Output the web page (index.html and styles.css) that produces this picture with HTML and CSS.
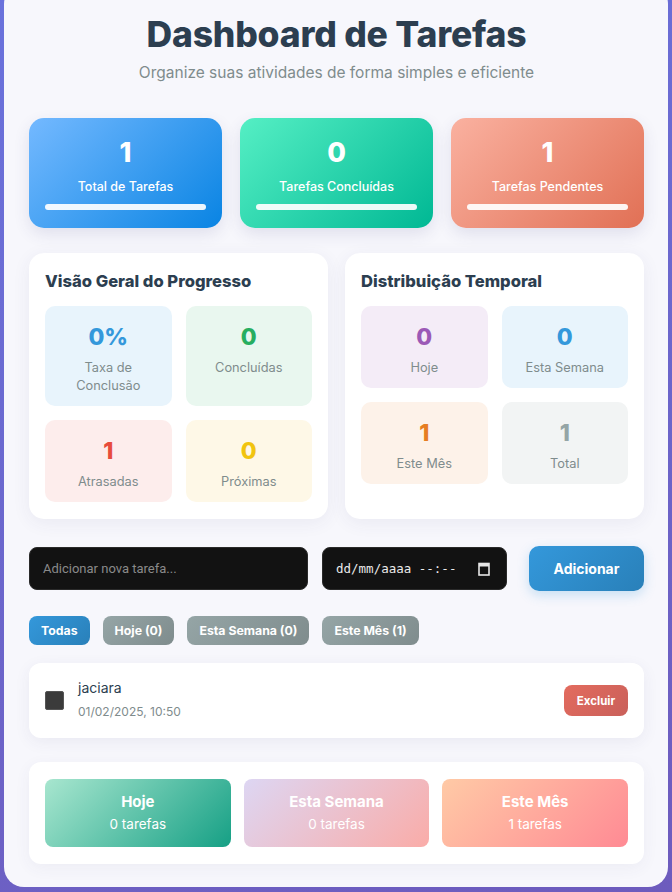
FILE: index.html
```html
<!DOCTYPE html>
<html lang="pt-BR">
<head>
<meta charset="utf-8">
<title>Dashboard de Tarefas</title>
<link rel="stylesheet" href="styles.css">
</head>
<body>
<div class="container">
  <header class="header">
    <h1 class="title">Dashboard de Tarefas</h1>
    <p class="subtitle">Organize suas atividades de forma simples e eficiente</p>
  </header>

  <section class="stats">
    <div class="stat stat-blue">
      <div class="stat-num">1</div>
      <div class="stat-label">Total de Tarefas</div>
      <div class="stat-bar"></div>
    </div>
    <div class="stat stat-green">
      <div class="stat-num">0</div>
      <div class="stat-label">Tarefas Concluídas</div>
      <div class="stat-bar"></div>
    </div>
    <div class="stat stat-red">
      <div class="stat-num">1</div>
      <div class="stat-label">Tarefas Pendentes</div>
      <div class="stat-bar"></div>
    </div>
  </section>

  <section class="panels">
    <div class="panel">
      <h2 class="panel-title">Visão Geral do Progresso</h2>
      <div class="tiles">
        <div class="tile t-blue"><div class="tile-num">0%</div><div class="tile-label">Taxa de Conclusão</div></div>
        <div class="tile t-green"><div class="tile-num">0</div><div class="tile-label">Concluídas</div></div>
        <div class="tile t-red"><div class="tile-num">1</div><div class="tile-label">Atrasadas</div></div>
        <div class="tile t-yellow"><div class="tile-num">0</div><div class="tile-label">Próximas</div></div>
      </div>
    </div>
    <div class="panel">
      <h2 class="panel-title">Distribuição Temporal</h2>
      <div class="tiles">
        <div class="tile t-purple"><div class="tile-num">0</div><div class="tile-label">Hoje</div></div>
        <div class="tile t-blue"><div class="tile-num">0</div><div class="tile-label">Esta Semana</div></div>
        <div class="tile t-orange"><div class="tile-num">1</div><div class="tile-label">Este Mês</div></div>
        <div class="tile t-gray"><div class="tile-num">1</div><div class="tile-label">Total</div></div>
      </div>
    </div>
  </section>

  <section class="add-row">
    <div class="field text-field"><span class="placeholder">Adicionar nova tarefa...</span></div>
    <div class="field date-field">
      <span class="date-text">dd/mm/aaaa --:--</span>
      <svg class="cal" width="12" height="14" viewBox="0 0 12 14"><rect x="1" y="1.5" width="10" height="11.5" fill="none" stroke="#e6e6e6" stroke-width="1.6"/><rect x="1" y="1.5" width="10" height="3" fill="#e6e6e6"/></svg>
    </div>
    <button class="add-btn">Adicionar</button>
  </section>

  <section class="filters">
    <button class="filter active">Todas</button>
    <button class="filter">Hoje (0)</button>
    <button class="filter">Esta Semana (0)</button>
    <button class="filter">Este Mês (1)</button>
  </section>

  <section class="task">
    <div class="check"></div>
    <div class="task-info">
      <div class="task-name">jaciara</div>
      <div class="task-date">01/02/2025, 10:50</div>
    </div>
    <button class="del-btn">Excluir</button>
  </section>

  <section class="summary">
    <div class="sum sum-today"><div class="sum-title">Hoje</div><div class="sum-sub">0 tarefas</div></div>
    <div class="sum sum-week"><div class="sum-title">Esta Semana</div><div class="sum-sub">0 tarefas</div></div>
    <div class="sum sum-month"><div class="sum-title">Este Mês</div><div class="sum-sub">1 tarefas</div></div>
  </section>
</div>
</body>
</html>
```

FILE: styles.css
```css
* { box-sizing: border-box; }

html, body { height: 100%; }

body {
  margin: 0;
  padding: 0 4px 5px;
  background: linear-gradient(160deg, #6a72dc 0%, #6d5bbd 100%);
  font-family: "Inter", "Noto Sans", sans-serif;
  color: #2c3e50;
  overflow: hidden;
}

.container {
  margin-top: -16px;
  background: #f7f7fc;
  border-radius: 20px;
  padding: 29px 24px 23px 25px;
}

.header { text-align: center; }

.title {
  margin: 0;
  font-size: 35.5px;
  line-height: 44px;
  font-weight: 800;
  color: #2c3e50;
  letter-spacing: -0.2px;
}

.subtitle {
  margin: 5px 0 0;
  font-size: 15.5px;
  line-height: 22px;
  color: #7f8c8d;
}

.stats {
  margin-top: 34px;
  display: grid;
  grid-template-columns: repeat(3, 1fr);
  gap: 18px;
}

.stat {
  height: 110px;
  border-radius: 15px;
  padding: 17px 16px 18px;
  color: #fff;
  text-align: center;
  box-shadow: 0 6px 16px rgba(60, 60, 120, 0.12);
}
.stat-blue { background: linear-gradient(135deg, #74b9ff, #0984e3); }
.stat-green { background: linear-gradient(135deg, #55efc4, #00b894); }
.stat-red { background: linear-gradient(135deg, #fab1a0, #e17055); }

.stat-num { font-size: 27px; line-height: 36px; font-weight: 800; }
.stat-label { margin-top: 6px; font-size: 12.5px; line-height: 20px; font-weight: 500; }
.stat-bar {
  margin-top: 7px;
  height: 6px;
  border-radius: 3px;
  background: rgba(255, 255, 255, 0.92);
}

.panels {
  margin-top: 25px;
  display: grid;
  grid-template-columns: 1fr 1fr;
  gap: 17px;
}

.panel {
  background: #fff;
  border-radius: 15px;
  padding: 16px 16px 17px;
  box-shadow: 0 4px 18px rgba(60, 60, 120, 0.07);
}

.panel-title {
  margin: 0 0 13px;
  font-size: 16.6px;
  line-height: 24px;
  font-weight: 800;
  color: #2c3e50;
}

.tiles {
  display: grid;
  grid-template-columns: 1fr 1fr;
  gap: 14px;
}

.tile {
  border-radius: 10px;
  padding: 17px 14px 11px;
  text-align: center;
}
.tile-num { font-size: 23px; line-height: 29px; font-weight: 800; }
.tile-label { margin-top: 7px; font-size: 12.8px; line-height: 18px; color: #7f8c8d; padding: 0 8px; }

.t-blue { background: #e8f4fc; }
.t-blue .tile-num { color: #3498db; }
.t-green { background: #e9f7ef; }
.t-green .tile-num { color: #27ae60; }
.t-red { background: #fdedec; }
.t-red .tile-num { color: #e74c3c; }
.t-yellow { background: #fef8e7; }
.t-yellow .tile-num { color: #f1c40f; }
.t-purple { background: #f4ecf7; }
.t-purple .tile-num { color: #9b59b6; }
.t-orange { background: #fdf2e9; }
.t-orange .tile-num { color: #e67e22; }
.t-gray { background: #f2f4f4; }
.t-gray .tile-num { color: #95a5a6; }

.add-row {
  margin-top: 27px;
  display: flex;
  align-items: center;
  gap: 14px;
}

.field {
  height: 43px;
  background: #121212;
  border: 1px solid #2a2a2a;
  border-radius: 8px;
  display: flex;
  align-items: center;
  padding: 0 13px;
}
.text-field { flex: 1; }
.placeholder { font-size: 13px; color: #8a8a8a; font-family: "Roboto", sans-serif; }
.date-field { width: 185px; justify-content: space-between; padding-right: 16px; }
.date-text { font-family: "DejaVu Sans Mono", monospace; font-size: 12.5px; color: #eaeaea; }
.cal { display: block; }

.add-btn {
  margin-left: 8px;
  width: 115px;
  height: 45px;
  border: 0;
  border-radius: 10px;
  background: linear-gradient(135deg, #3498db, #2980b9);
  color: #fff;
  font-family: inherit;
  font-size: 14px;
  font-weight: 700;
  box-shadow: 0 4px 12px rgba(52, 152, 219, 0.25);
}

.filters {
  margin-top: 25px;
  display: flex;
  gap: 13px;
}

.filter {
  height: 29px;
  padding: 0 12px;
  border: 0;
  border-radius: 8px;
  background: linear-gradient(135deg, #95a5a6, #7f8c8d);
  color: #fff;
  font-family: inherit;
  font-size: 12.3px;
  font-weight: 700;
}
.filter.active { background: linear-gradient(135deg, #3498db, #2980b9); }

.task {
  margin-top: 18px;
  height: 75px;
  background: #fff;
  border-radius: 12px;
  display: flex;
  align-items: center;
  padding: 0 16px;
  box-shadow: 0 4px 16px rgba(60, 60, 120, 0.07);
}

.check {
  width: 19px;
  height: 19px;
  background: #3b3b3b;
  border: 1px solid #555;
  border-radius: 2px;
}

.task-info { flex: 1; margin-left: 14px; margin-top: -3px; }
.task-name { font-size: 14px; line-height: 20px; color: #2c3e50; }
.task-date { margin-top: 5px; font-size: 12px; line-height: 18px; color: #7f8c8d; }

.del-btn {
  width: 64px;
  height: 31px;
  border: 0;
  border-radius: 8px;
  background: linear-gradient(135deg, #e36b5e, #c9605a);
  color: #fff;
  font-family: inherit;
  font-size: 11.5px;
  font-weight: 700;
}

.summary {
  margin-top: 24px;
  background: #fff;
  border-radius: 12px;
  padding: 17px 16px;
  display: grid;
  grid-template-columns: repeat(3, 1fr);
  gap: 13px;
  box-shadow: 0 4px 16px rgba(60, 60, 120, 0.06);
}

.sum {
  height: 68px;
  border-radius: 8px;
  color: #fff;
  text-align: center;
  padding-top: 13px;
}
.sum-title { font-size: 15px; line-height: 20px; font-weight: 700; }
.sum-sub { margin-top: 2px; font-size: 13.5px; line-height: 20px; }

.sum-today { background: linear-gradient(135deg, #a8e6cf, #16a085); }
.sum-week { background: linear-gradient(135deg, #ddd6f3, #faaca8); }
.sum-month { background: linear-gradient(135deg, #ffcaa6, #ff8a94); }
```
